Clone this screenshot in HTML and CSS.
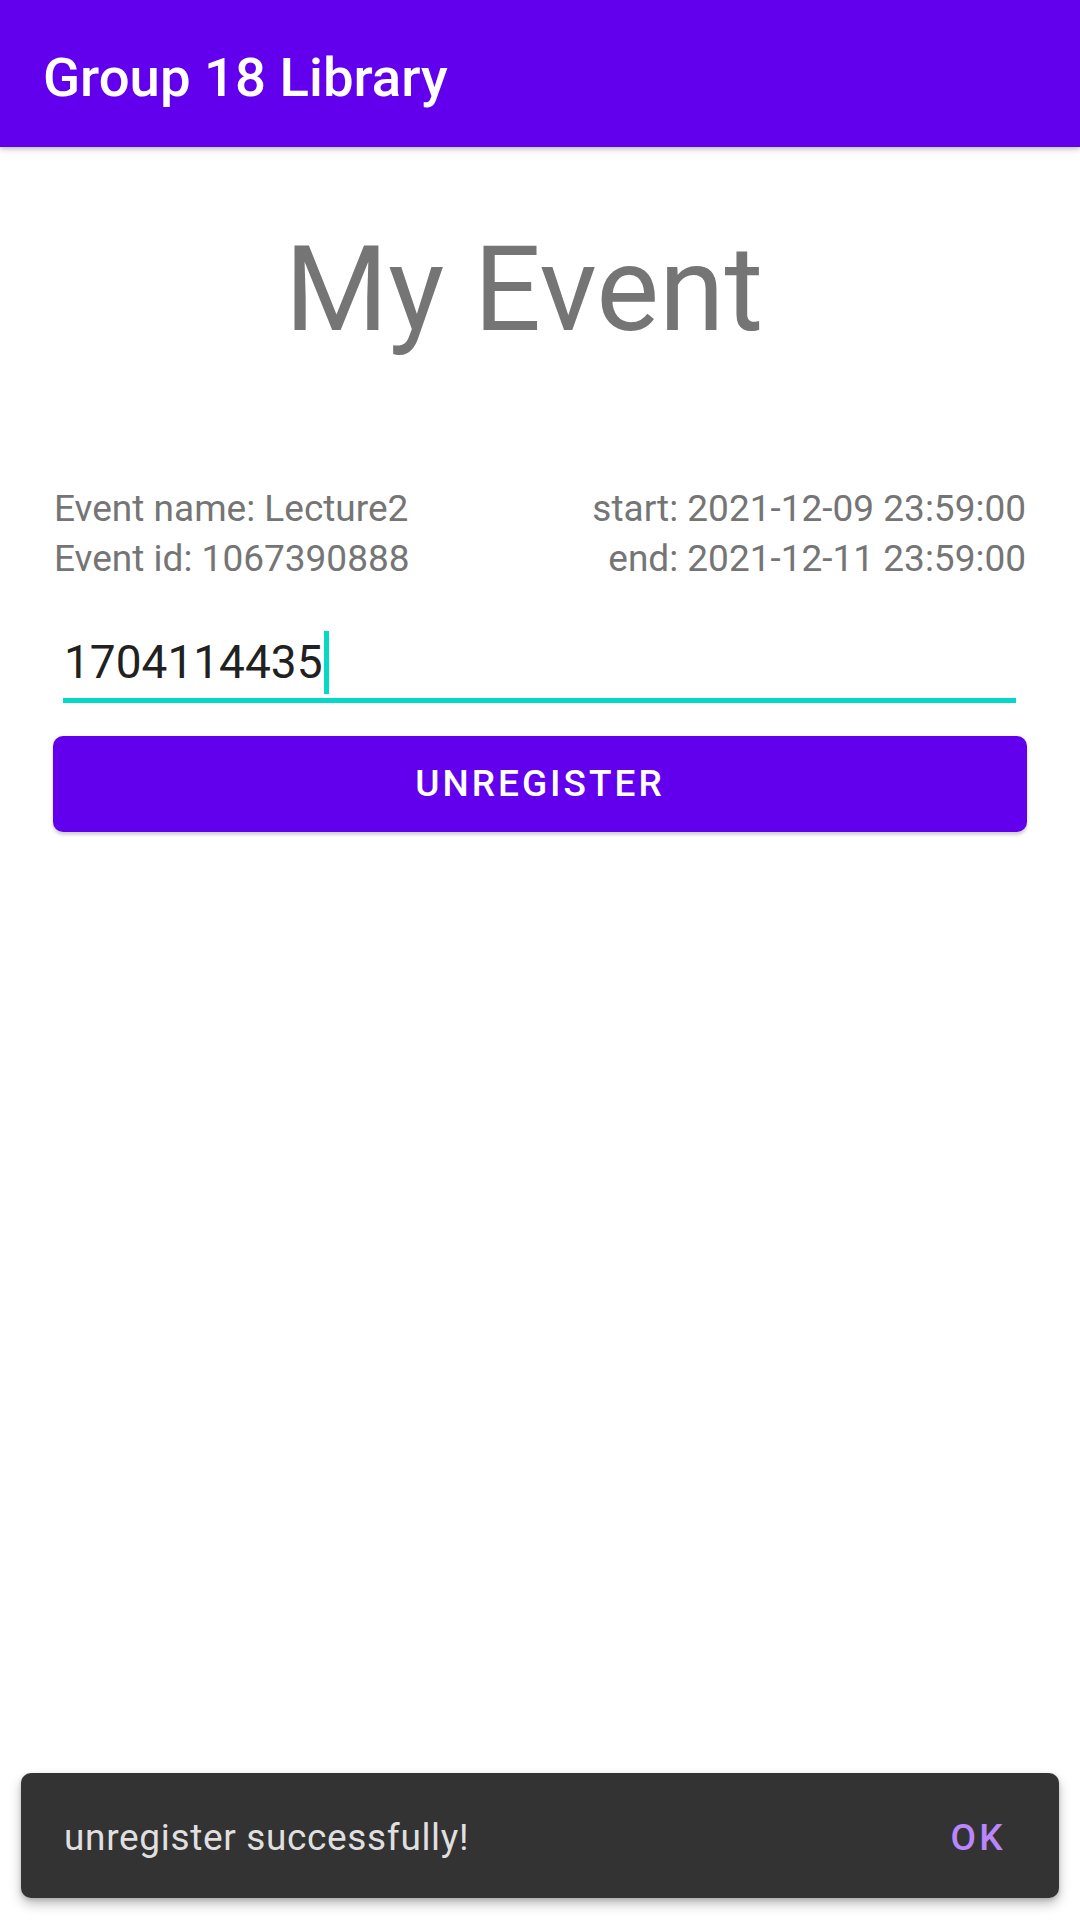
FILE: index.html
```html
<!DOCTYPE html>
<html lang="en">
<head>
<meta charset="utf-8">
<title>Group 18 Library</title>
<link rel="stylesheet" href="styles.css">
</head>
<body>
<div class="screen">
  <header class="appbar">
    <div class="appbar-title">Group 18 Library</div>
  </header>
  <main class="content">
    <h1 class="page-title">My Event</h1>
    <div class="info-row">
      <div class="info-col">
        <div class="info-line">Event name: Lecture2</div>
        <div class="info-line">Event id: 1067390888</div>
      </div>
      <div class="info-col info-col-right">
        <div class="info-line">start: 2021-12-09 23:59:00</div>
        <div class="info-line">end: 2021-12-11 23:59:00</div>
      </div>
    </div>
    <div class="field">
      <span class="field-text">1704114435</span><span class="cursor"></span>
    </div>
    <button class="btn-primary" type="button">Unregister</button>
  </main>
  <div class="snackbar">
    <span class="snackbar-text">unregister successfully!</span>
    <span class="snackbar-action">OK</span>
  </div>
</div>
</body>
</html>
```

FILE: styles.css
```css
html, body {
  margin: 0;
  padding: 0;
  background: #ffffff;
}

body {
  font-family: Roboto, "Noto Sans", "Liberation Sans", sans-serif;
}

.screen {
  position: relative;
  width: 1080px;
  height: 1920px;
  overflow: hidden;
  background: #ffffff;
}

.appbar {
  height: 147px;
  box-sizing: border-box;
  padding: 50px 0 0 43px;
  background: #6200ee;
  box-shadow: 0 2px 4px rgba(0, 0, 0, 0.18), 0 4px 8px rgba(0, 0, 0, 0.08);
  position: relative;
  z-index: 1;
}

.appbar-title {
  color: #ffffff;
  font-size: 54.5px;
  line-height: 55px;
  font-weight: 500;
}

.content {
  padding: 0 53px;
}

.page-title {
  margin: 84px 0 0 0;
  padding-right: 32px;
  font-size: 118.5px;
  line-height: 118.5px;
  font-weight: 400;
  color: #757575;
  text-align: center;
}

.info-row {
  display: flex;
  justify-content: space-between;
  margin-top: 134px;
  padding: 0 1px 0 1px;
}

.info-col {
  display: flex;
  flex-direction: column;
}

.info-col-right {
  align-items: flex-end;
}

.info-line {
  font-size: 37px;
  line-height: 50px;
  color: #757575;
}

.field {
  margin: 47px 11px 0 10px;
  padding: 0 0 4px 1px;
  border-bottom: 5px solid #03dac5;
  height: 63px;
  display: flex;
  align-items: flex-start;
}

.field-text {
  font-size: 46px;
  line-height: 63px;
  color: #212121;
}

.cursor {
  display: inline-block;
  width: 5px;
  height: 63px;
  margin-left: 1px;
  background: #03dac5;
}

.btn-primary {
  display: block;
  width: 100%;
  height: 96px;
  margin-top: 33px;
  border: none;
  border-radius: 10px;
  background: #6200ee;
  color: #ffffff;
  font-family: Roboto, "Noto Sans", "Liberation Sans", sans-serif;
  font-size: 37px;
  font-weight: 500;
  letter-spacing: 3px;
  text-transform: uppercase;
  box-shadow: 0 3px 3px rgba(0, 0, 0, 0.14), 0 1px 6px rgba(0, 0, 0, 0.08);
}

.snackbar {
  position: absolute;
  left: 21px;
  right: 21px;
  bottom: 22px;
  height: 125px;
  box-sizing: border-box;
  padding: 3px 53px 0 43px;
  display: flex;
  align-items: center;
  justify-content: space-between;
  background: #333333;
  border-radius: 10px;
  box-shadow: 0 6px 12px rgba(0, 0, 0, 0.25), 0 2px 4px rgba(0, 0, 0, 0.15);
}

.snackbar-text {
  font-size: 37px;
  letter-spacing: 0.66px;
  color: rgba(255, 255, 255, 0.87);
}

.snackbar-action {
  font-size: 37px;
  font-weight: 500;
  letter-spacing: 3.3px;
  color: #bb86fc;
}
```
